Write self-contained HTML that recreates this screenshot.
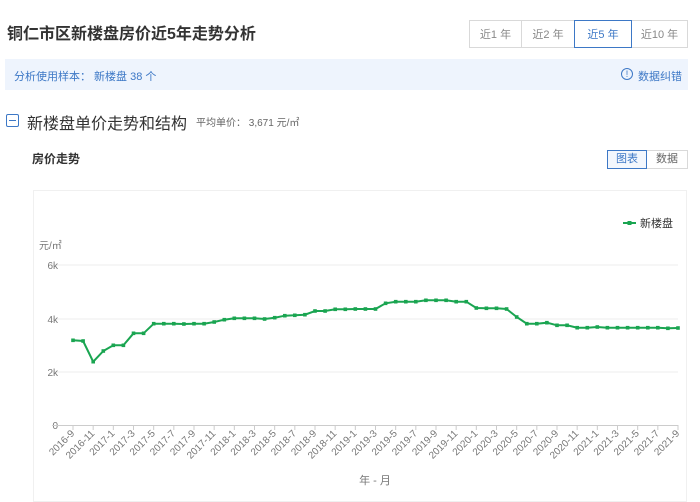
<!DOCTYPE html>
<html><head><meta charset="utf-8"><style>
body{margin:0;width:700px;height:488px;overflow:hidden;background:#fff;font-family:"Liberation Sans","Noto Sans CJK SC",sans-serif;color:#333;position:relative}
.a{position:absolute}
.tab{position:absolute;top:20px;height:28px;border:1px solid #d9d9d9;font-size:11px;color:#888;line-height:28px;text-align:center;box-sizing:border-box}
</style></head><body>
<div class="a" style="left:7px;top:20px;font-size:16px;font-weight:bold;color:#333">铜仁市区新楼盘房价近5年走势分析</div>
<div class="tab" style="left:469px;width:53px">近1 年</div>
<div class="tab" style="left:521px;width:54px">近2 年</div>
<div class="tab" style="left:631px;width:57px">近10 年</div>
<div class="tab" style="left:574px;width:58px;border-color:#3d78c6;color:#3d78c6">近5 年</div>
<div class="a" style="left:5px;top:59px;width:683px;height:31px;background:#eef4fd"></div>
<div class="a" style="left:14px;top:68px;font-size:11px;color:#3d78c6">分析使用样本：&nbsp;新楼盘 38 个</div>
<div class="a" style="left:621px;top:68px;width:10px;height:10px;border:1px solid #3d78c6;border-radius:50%;font-size:9px;color:#3d78c6;text-align:center;line-height:10px">!</div>
<div class="a" style="left:638px;top:68px;font-size:11px;color:#3d78c6">数据纠错</div>
<div class="a" style="left:6px;top:114px;width:11px;height:11px;border:1px solid #3d78c6;border-radius:2px"><div style="position:absolute;left:2px;top:5px;width:7px;height:1px;background:#3d78c6"></div></div>
<div class="a" style="left:27px;top:110px;font-size:16px;color:#333">新楼盘单价走势和结构</div>
<div class="a" style="left:196px;top:114px;font-size:10px;color:#666">平均单价：&nbsp;3,671 元/㎡</div>
<div class="a" style="left:32px;top:150px;font-size:12px;font-weight:bold;color:#333">房价走势</div>
<div class="a" style="left:607px;top:150px;width:40px;height:19px;border:1px solid #3d78c6;box-sizing:border-box;font-size:11px;color:#3d78c6;text-align:center;line-height:17px;background:#f3f7fd">图表</div>
<div class="a" style="left:647px;top:150px;width:41px;height:19px;border:1px solid #d9d9d9;border-left:none;box-sizing:border-box;font-size:11px;color:#666;text-align:center;line-height:17px">数据</div>
<div class="a" style="left:33px;top:190px;width:652px;height:310px;border:1px solid #f0f0f0"></div>
<svg class="a" style="left:0;top:0" width="700" height="488" id="s" font-family="Liberation Sans, Noto Sans CJK SC, sans-serif"></svg>
<script>
var z=[481,483,545,513,496,496,460,460,431,431,431,432,431,431,426,419,415,415,415,417,413,407,406,404,393,393,388,388,387,387,387,370,365,365,365,361,361,361,365,365,384,385,385,387,411,431,431,428,436,436,443,443,441,443,443,443,443,443,443,445,444];
var h='';
[[265,'6k'],[319,'4k'],[372,'2k']].forEach(function(g){h+='<line x1="52" x2="678" y1="'+g[0]+'" y2="'+g[0]+'" stroke="#ececec"/><text x="58" y="'+(g[0]+4)+'" font-size="10" fill="#777" text-anchor="end">'+g[1]+'</text>';});
h+='<text x="58" y="429" font-size="10" fill="#777" text-anchor="end">0</text>';
h+='<line x1="52" x2="678" y1="425.5" y2="425.5" stroke="#ccc"/>';
h+='<text x="39" y="249" font-size="10" fill="#777">元/㎡</text>';
var st=(678-73)/60,pts=[];
for(var i=0;i<61;i++){var x=73+i*st,y=z[i]/3+180;pts.push(x.toFixed(1)+','+y.toFixed(1));}
for(var i=0;i<61;i+=2){var x=73+i*st;var y=2016*12+8+i,yr=Math.floor(y/12),m=y%12+1;
h+='<line x1="'+x+'" x2="'+x+'" y1="425" y2="430" stroke="#ccc"/>';
h+='<text transform="translate('+(x+2)+',434) rotate(-45)" font-size="10" fill="#777" text-anchor="end">'+yr+'-'+m+'</text>';}
h+='<polyline points="'+pts.join(' ')+'" fill="none" stroke="#1aa551" stroke-width="2"/>';
pts.forEach(function(p){var q=p.split(',');h+='<rect x="'+(q[0]-1.8)+'" y="'+(q[1]-1.8)+'" width="3.6" height="3.6" fill="#1aa551"/>';});
h+='<line x1="623" x2="636" y1="223" y2="223" stroke="#1aa551" stroke-width="2"/><rect x="627.5" y="221" width="4" height="4" fill="#1aa551"/><text x="640" y="227" font-size="11" fill="#333">新楼盘</text>';
h+='<text x="375" y="484" font-size="11" fill="#777" text-anchor="middle">年 - 月</text>';
document.getElementById('s').innerHTML=h;
</script>
</body></html>
